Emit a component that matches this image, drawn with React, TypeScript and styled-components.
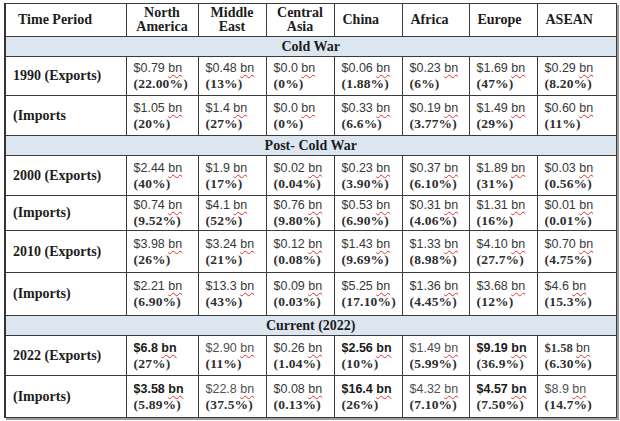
import React from "react";
import styled, { createGlobalStyle } from "styled-components";

const Global = createGlobalStyle`
  html, body { margin: 0; padding: 0; background: #fff; }
  body { width: 620px; height: 421px; overflow: hidden; }
`;

const Page = styled.div`
  padding: 3px 0 0 4px;
`;

const Table = styled.table`
  border-collapse: collapse;
  table-layout: fixed;
  width: 611px;
  border: 1px solid #333;
  border-left-width: 2px;
  box-shadow: 2px 2px 0 #9a9a9a;
  color: #2a2a2a;
`;

const HeadCell = styled.th<{ $center?: boolean; $first?: boolean }>`
  border: 1px solid #3a3a3a;
  height: 32px;
  padding: 0 0 0 ${(p) => (p.$first ? 12 : 8)}px;
  text-align: ${(p) => (p.$center ? "center" : "left")};
  ${(p) => (p.$center ? "padding: 0;" : "")}
  font-family: "Liberation Serif", "DejaVu Serif", serif;
  font-weight: 700;
  font-size: 14px;
  line-height: 14px;
  color: #1c1c1c;
  vertical-align: middle;
`;

const BandCell = styled.td`
  border: 1px solid #3a3a3a;
  background: #dce6f1;
  height: 19px;
  padding: 0;
  text-align: center;
  font-family: "Liberation Serif", "DejaVu Serif", serif;
  font-weight: 700;
  font-size: 14px;
  line-height: 14px;
  color: #1c1c1c;
`;

const Row = styled.tr<{ $h: number }>`
  height: ${(p) => p.$h}px;
`;

const LabelCell = styled.td`
  border: 1px solid #3a3a3a;
  padding: 0 0 0 7px;
  font-family: "Liberation Serif", "DejaVu Serif", serif;
  font-weight: 700;
  font-size: 14px;
  color: #1c1c1c;
  vertical-align: middle;
`;

const DataCell = styled.td`
  border: 1px solid #3a3a3a;
  padding: 0 0 0 7px;
  vertical-align: middle;
  white-space: nowrap;
`;

const Value = styled.div<{ $bold?: boolean; $light?: boolean }>`
  font-family: "Liberation Sans", Arial, sans-serif;
  font-size: 12.5px;
  line-height: 16px;
  font-weight: ${(p) => (p.$bold ? 700 : 400)};
  color: ${(p) => (p.$bold ? "#1a1a1a" : p.$light ? "#505050" : "#383838")};
`;

const SerifAmt = styled.span`
  font-family: "Liberation Serif", "DejaVu Serif", serif;
  font-weight: 700;
  font-size: 12.5px;
`;

const Bn = styled.span`
  text-decoration: underline wavy #e0302a;
  text-decoration-thickness: 1px;
  text-underline-offset: 2px;
`;

const Pct = styled.div`
  font-family: "Liberation Serif", "DejaVu Serif", serif;
  font-weight: 700;
  font-size: 13.5px;
  line-height: 16px;
  letter-spacing: 0.2px;
  color: #2e2e2e;
`;

type Cell = { v: string; p: string; b?: boolean; l?: boolean; serif?: boolean };
type DataRow = { label: string; h: number; cells: Cell[] };
type Section = { title: string; rows: DataRow[] };

const c = (v: string, p: string, o: Partial<Cell> = {}): Cell => ({ v, p, ...o });

const sections: Section[] = [
  {
    title: "Cold War",
    rows: [
      {
        label: "1990 (Exports)",
        h: 39,
        cells: [
          c("$0.79", "(22.00%)"),
          c("$0.48", "(13%)"),
          c("$0.0", "(0%)"),
          c("$0.06", "(1.88%)"),
          c("$0.23", "(6%)"),
          c("$1.69", "(47%)"),
          c("$0.29", "(8.20%)"),
        ],
      },
      {
        label: "(Imports",
        h: 40,
        cells: [
          c("$1.05", "(20%)"),
          c("$1.4", "(27%)"),
          c("$0.0", "(0%)"),
          c("$0.33", "(6.6%)"),
          c("$0.19", "(3.77%)"),
          c("$1.49", "(29%)"),
          c("$0.60", "(11%)"),
        ],
      },
    ],
  },
  {
    title: "Post- Cold War",
    rows: [
      {
        label: "2000 (Exports)",
        h: 40,
        cells: [
          c("$2.44", "(40%)"),
          c("$1.9", "(17%)"),
          c("$0.02", "(0.04%)"),
          c("$0.23", "(3.90%)"),
          c("$0.37", "(6.10%)"),
          c("$1.89", "(31%)"),
          c("$0.03", "(0.56%)"),
        ],
      },
      {
        label: "(Imports)",
        h: 35,
        cells: [
          c("$0.74", "(9.52%)"),
          c("$4.1", "(52%)"),
          c("$0.76", "(9.80%)"),
          c("$0.53", "(6.90%)"),
          c("$0.31", "(4.06%)"),
          c("$1.31", "(16%)"),
          c("$0.01", "(0.01%)"),
        ],
      },
      {
        label: "2010 (Exports)",
        h: 42,
        cells: [
          c("$3.98", "(26%)"),
          c("$3.24", "(21%)"),
          c("$0.12", "(0.08%)"),
          c("$1.43", "(9.69%)"),
          c("$1.33", "(8.98%)"),
          c("$4.10", "(27.7%)"),
          c("$0.70", "(4.75%)"),
        ],
      },
      {
        label: "(Imports)",
        h: 43,
        cells: [
          c("$2.21", "(6.90%)"),
          c("$13.3", "(43%)"),
          c("$0.09", "(0.03%)"),
          c("$5.25", "(17.10%)"),
          c("$1.36", "(4.45%)"),
          c("$3.68", "(12%)"),
          c("$4.6", "(15.3%)"),
        ],
      },
    ],
  },
  {
    title: "Current (2022)",
    rows: [
      {
        label: "2022 (Exports)",
        h: 40,
        cells: [
          c("$6.8", "(27%)", { b: true }),
          c("$2.90", "(11%)", { l: true }),
          c("$0.26", "(1.04%)"),
          c("$2.56", "(10%)", { b: true }),
          c("$1.49", "(5.99%)", { l: true }),
          c("$9.19", "(36.9%)", { b: true }),
          c("$1.58", "(6.30%)", { serif: true }),
        ],
      },
      {
        label: "(Imports)",
        h: 42,
        cells: [
          c("$3.58", "(5.89%)", { b: true }),
          c("$22.8", "(37.5%)", { l: true }),
          c("$0.08", "(0.13%)"),
          c("$16.4", "(26%)", { b: true }),
          c("$4.32", "(7.10%)", { l: true }),
          c("$4.57", "(7.50%)", { b: true }),
          c("$8.9", "(14.7%)", { l: true }),
        ],
      },
    ],
  },
];

const widths = [121, 72, 68, 68, 68, 67, 68, 79];

export default function App() {
  return (
    <>
      <Global />
      <Page>
        <Table>
          <colgroup>
            {widths.map((w, i) => (
              <col key={i} style={{ width: w }} />
            ))}
          </colgroup>
          <thead>
            <tr>
              <HeadCell $first>Time Period</HeadCell>
              <HeadCell $center>
                North
                <br />
                America
              </HeadCell>
              <HeadCell $center>
                Middle
                <br />
                East
              </HeadCell>
              <HeadCell $center>
                Central
                <br />
                Asia
              </HeadCell>
              <HeadCell>China</HeadCell>
              <HeadCell>Africa</HeadCell>
              <HeadCell>Europe</HeadCell>
              <HeadCell>ASEAN</HeadCell>
            </tr>
          </thead>
          <tbody>
            {sections.map((s) => (
              <React.Fragment key={s.title}>
                <tr>
                  <BandCell colSpan={8}>{s.title}</BandCell>
                </tr>
                {s.rows.map((r, ri) => (
                  <Row key={ri} $h={r.h}>
                    <LabelCell>{r.label}</LabelCell>
                    {r.cells.map((cell, ci) => (
                      <DataCell key={ci}>
                        <Value $bold={cell.b} $light={cell.l}>
                          {cell.serif ? <SerifAmt>{cell.v}</SerifAmt> : cell.v}{" "}
                          <Bn>bn</Bn>
                        </Value>
                        <Pct>{cell.p}</Pct>
                      </DataCell>
                    ))}
                  </Row>
                ))}
              </React.Fragment>
            ))}
          </tbody>
        </Table>
      </Page>
    </>
  );
}
